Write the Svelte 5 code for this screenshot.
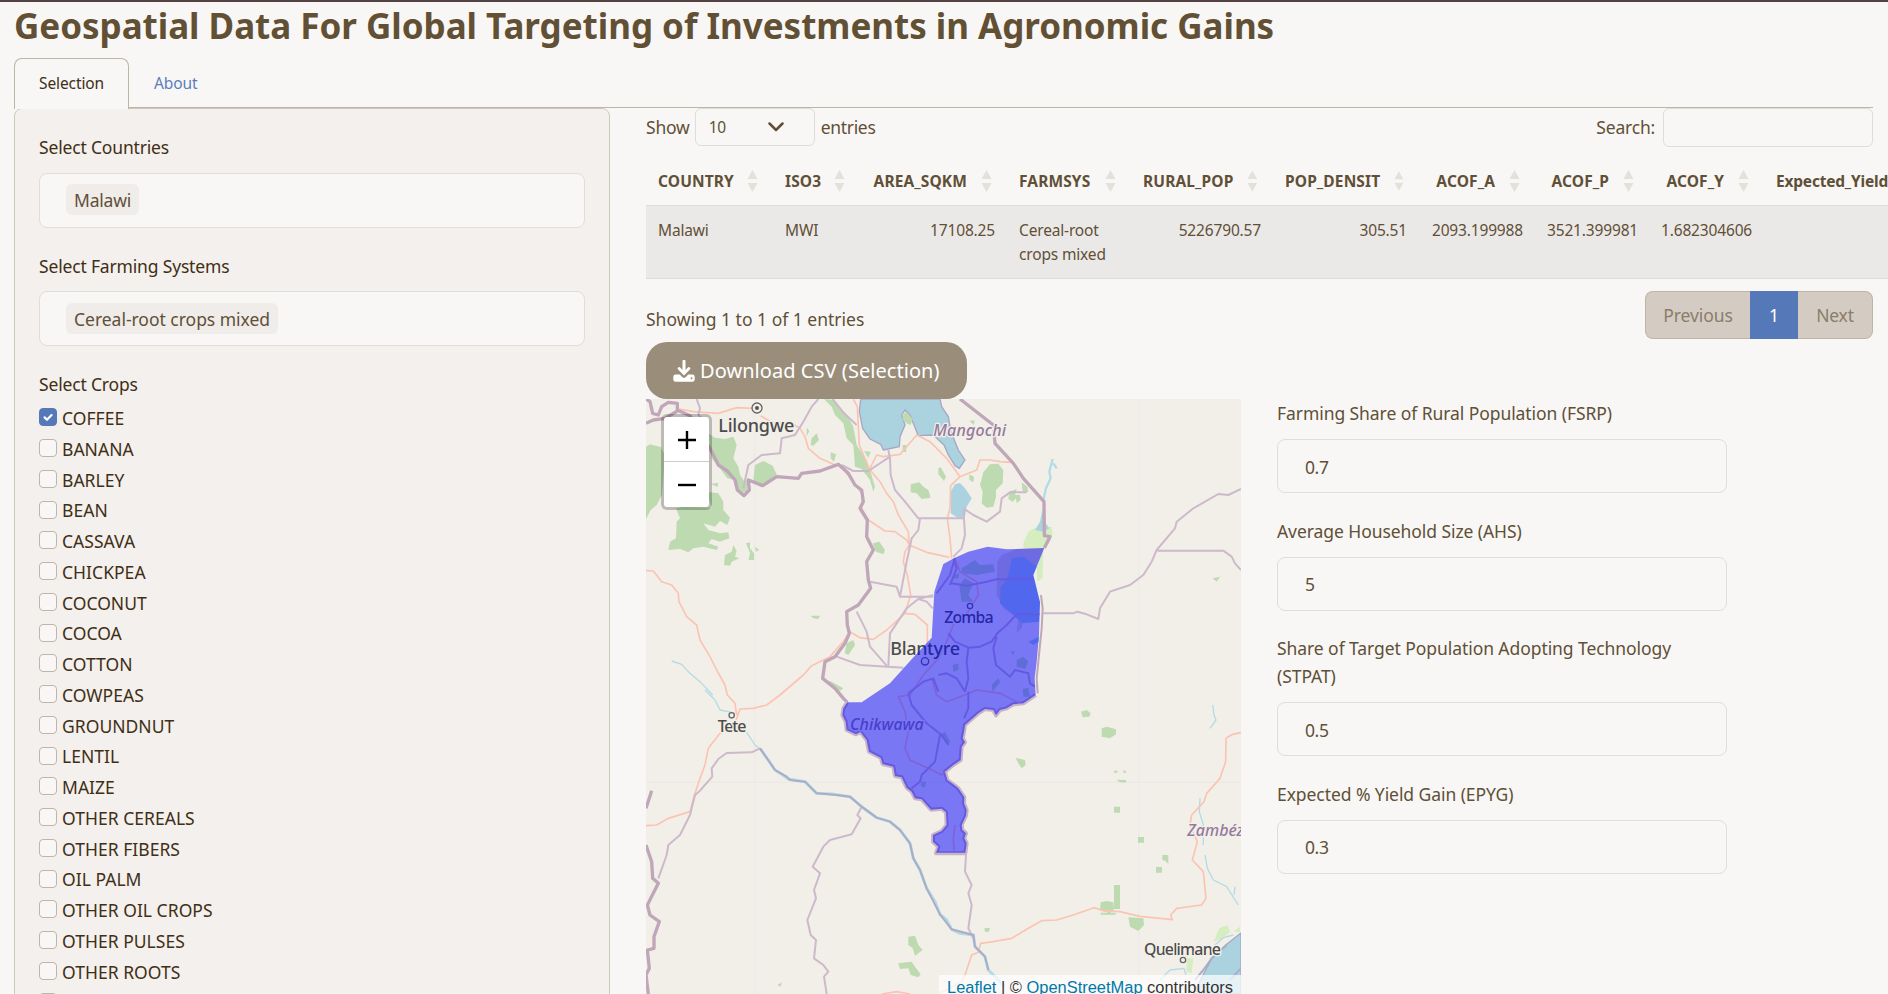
<script>
  const crops = [
    'COFFEE', 'BANANA', 'BARLEY', 'BEAN', 'CASSAVA', 'CHICKPEA', 'COCONUT', 'COCOA', 'COTTON', 'COWPEAS',
    'GROUNDNUT', 'LENTIL', 'MAIZE', 'OTHER CEREALS', 'OTHER FIBERS', 'OIL PALM', 'OTHER OIL CROPS',
    'OTHER PULSES', 'OTHER ROOTS', ''
  ];
  const columns = [
    { name: 'COUNTRY', value: 'Malawi', width: 127 },
    { name: 'ISO3', value: 'MWI', width: 87 },
    { name: 'AREA_SQKM', value: '17108.25', width: 147, num: true },
    { name: 'FARMSYS', value: 'Cereal-root crops mixed', width: 124 },
    { name: 'RURAL_POP', value: '5226790.57', width: 142, num: true },
    { name: 'POP_DENSIT', value: '305.51', width: 146, num: true },
    { name: 'ACOF_A', value: '2093.199988', width: 116, num: true },
    { name: 'ACOF_P', value: '3521.399981', width: 114, num: true },
    { name: 'ACOF_Y', value: '1.682304606', width: 115, num: true },
    { name: 'Expected_Yield', value: '', width: 165, num: true }
  ];
  const fields = [
    { label: 'Farming Share of Rural Population (FSRP)', value: '0.7' },
    { label: 'Average Household Size (AHS)', value: '5' },
    { label: 'Share of Target Population Adopting Technology (STPAT)', value: '0.5' },
    { label: 'Expected % Yield Gain (EPYG)', value: '0.3' }
  ];
  const district =
    'M622 922 L665 922 L750 865 L815 793 L875 728 L883 590 L910 507 L945 488 L985 470 L1043 455 L1100 463 L1213 459 L1180 540 L1200 622 L1197 720 L1190 800 L1184 850 L1187 900 L1150 925 L1120 928 L1100 940 L1080 945 L1068 961 L1060 945 L1035 942 L1015 955 L975 990 L972 1010 L968 1030 L975 1042 L965 1055 L962 1095 L940 1110 L915 1130 L922 1155 L940 1168 L955 1180 L973 1207 L972 1225 L980 1245 L978 1262 L965 1290 L967 1305 L978 1315 L973 1330 L980 1345 L976 1373 L888 1373 L895 1355 L879 1340 L879 1320 L905 1308 L920 1290 L918 1252 L905 1241 L873 1244 L845 1213 L825 1210 L815 1190 L800 1178 L785 1147 L765 1143 L760 1115 L728 1107 L722 1088 L687 1070 L680 1035 L661 1011 L648 1018 L620 1005 L617 980 L607 960 L610 940 Z';
  const boundary =
    'M1187 900 L1150 925 L1120 928 L1100 940 L1080 945 L1068 961 L1060 945 L1035 942 L1015 955 L975 990 L972 1010 L968 1030 L975 1042 L965 1055 L962 1095 L940 1110 L915 1130 L922 1155 L940 1168 L955 1180 L973 1207 L972 1225 L980 1245 L978 1262 L965 1290 L967 1305 L978 1315 L973 1330 L980 1345 L976 1375 L888 1375 L895 1355 L879 1340 L879 1320 L905 1308 L920 1290 L918 1252 L905 1241 L873 1244 L845 1213 L825 1210 L815 1190 L800 1178 L785 1147 L765 1143 L760 1115 L728 1107 L722 1088 L687 1070 L680 1035 L661 1011 L648 1018 L620 1005 L617 980 L607 960 L610 940 L622 922';
</script>

<div class="page">
  <h1>Geospatial Data For Global Targeting of Investments in Agronomic Gains</h1>
  <nav>
    <a class="tab active" href="#selection">Selection</a>
    <a class="tab" href="#about">About</a>
  </nav>

  <div class="columns">
    <aside>
      <div class="label">Select Countries</div>
      <div class="picker first"><span class="tag">Malawi</span></div>
      <div class="label">Select Farming Systems</div>
      <div class="picker"><span class="tag wide">Cereal-root crops mixed</span></div>
      <div class="label">Select Crops</div>
      <div class="crops">
        {#each crops as crop, i}
          <label class="crop">
            <span class="box" class:on={i === 0}>
              {#if i === 0}
                <svg viewBox="0 0 18 18"><path d="M5.600 9.400 8 11.800l4.600-4.700" /></svg>
              {/if}
            </span>
            <span class="name">{crop}</span>
          </label>
        {/each}
      </div>
    </aside>

    <main>
      <div class="controls">
        <div class="length">
          <span>Show</span>
          <div class="select">
            10
            <svg viewBox="0 0 16 10"><path d="M1.5 1.5 8 8l6.500-6.500" /></svg>
          </div>
          <span class="entries">entries</span>
        </div>
        <div class="search"><span>Search:</span><input aria-label="Search" /></div>
      </div>

      <div class="table">
        <div class="row head">
          {#each columns as c}
            <div class="cell" class:num={c.num} style="width: {c.width}px">
              <span>{c.name}</span>
              {#if c.name !== 'Expected_Yield'}
                <svg viewBox="0 0 11 22"><path d="M5.500 0 10.500 9H.5ZM.5 13h10l-5 9Z" /></svg>
              {/if}
            </div>
          {/each}
        </div>
        <div class="row body">
          {#each columns as c}
            <div class="cell" class:num={c.num} style="width: {c.width}px">{c.value}</div>
          {/each}
        </div>
      </div>

      <div class="footer">
        <div class="info">Showing 1 to 1 of 1 entries</div>
        <div class="pager">
          <span class="prev">Previous</span><span class="current">1</span><span class="next">Next</span>
        </div>
      </div>

      <button class="download">
        <svg viewBox="0 0 22 22">
          <path d="M9.500 1.200a1.500 1.500 0 0 1 3 0V10l2.400-2.400a1.400 1.400 0 0 1 2 2L11 15.400 5.100 9.600a1.400 1.400 0 0 1 2-2L9.500 10Z" />
          <path fill-rule="evenodd" d="M2.600 14.500h4.100l2.500 2.400a2.600 2.600 0 0 0 3.600 0l2.500-2.400h4.100A2.300 2.300 0 0 1 21.700 16.800v2.700a2.300 2.300 0 0 1-2.300 2.300H2.600A2.300 2.300 0 0 1 .3 19.500v-2.700a2.300 2.300 0 0 1 2.300-2.300ZM18.500 17.300a1 1 0 1 0 0 2 1 1 0 0 0 0-2Z" />
        </svg>
        <span>Download CSV (Selection)</span>
      </button>

      <div class="lower">
        <div class="map">
          <svg class="tiles" viewBox="18 12 1785 1785">
            <g class="seams"><path d="M344 12V1797M1496 12V1797M18 1162H1803" /></g>

            <g class="forest">
              <path d="M18 155 30 148 62 156 75 180 66 300 50 330 32 345 18 372Z" />
              <path d="M205 115 225 128 255 132 280 125 290 150 280 190 295 215 300 240 315 262 325 250 320 290 300 295 285 255 262 250 240 220 215 190Z" />
              <path d="M345 210 370 198 398 212 410 238 385 268 360 275 340 255Z" />
              <path d="M108 340 130 335 215 338 200 290 235 295 250 320 250 345 270 368 262 390 240 378 225 395 190 385 205 405 240 415 265 412 268 430 240 440 215 432 205 445 235 455 230 465 190 455 160 460 145 472 120 462 85 465 90 440 108 430 110 380 120 370Z" />
              <path d="M255 480 275 470 280 450 290 468 285 485 298 490 275 500 270 512 252 510ZM318 445 330 442 330 460 342 475 342 495 325 495 330 475ZM345 455 358 465 348 470ZM212 266 235 264 232 276Z" />
              <path d="M552 12 578 14 620 58 640 95 650 150 680 195 690 225 705 275 700 290 690 255 665 222 645 215 640 150 620 130 610 85 585 60 575 35Z" />
              <path d="M515 130 530 115 537 135 520 152 512 150ZM572 172 588 178 582 200 572 190ZM500 98 508 108 500 124ZM672 168 692 170 685 188Z" />
              <path d="M812 268 838 262 850 275 865 285 872 308 845 312 830 295 812 292Z" />
              <path d="M698 445 718 440 735 465 730 478 708 470ZM788 150 800 150 798 172 788 170ZM895 220 902 216 918 245 912 258 895 238Z" />
              <path d="M620 745 640 735 645 750 625 780 614 775ZM512 662 540 662 535 672 520 670ZM555 855 575 860 610 880 600 888 570 870Z" />
              <path d="M1030 232 1050 208 1075 206 1090 225 1088 265 1068 285 1068 305 1060 335 1040 338 1025 325 1028 290 1020 270ZM988 238 1002 245 1000 262 988 255ZM1108 290 1130 282 1125 300 1140 300 1142 315 1130 325 1128 310 1118 320 1105 312ZM1145 262 1162 275 1165 292 1148 288ZM988 78 1004 76 1002 90Z" />
              <path d="M1323 950 1340 945 1352 955 1348 965 1328 967ZM1385 1000 1400 995 1428 1003 1428 1018 1410 1030 1385 1025ZM1127 1089 1155 1095 1157 1110 1145 1120 1135 1105Z" />
              <path d="M1422 1235h18v18h-18ZM1494 1326h18v17h-18ZM1567 1380h18v26l-12-10h-6ZM1548 1416h18v17h-18ZM1422 1470h18v72h-18ZM1430 1154 1458 1155 1457 1163 1438 1161ZM1422 1127h10v6h-10ZM1450 1127h8v6h-8ZM1382 1522 1400 1518 1420 1522 1422 1542 1410 1555 1380 1545ZM1465 1567 1510 1570 1512 1590 1495 1608 1470 1595ZM1382 1553h45v6h-45ZM1033 1600 1050 1598 1047 1610 1035 1610Z" transform="translate(0 0)" />
              <path d="M805 1625 825 1622 835 1650 848 1665 825 1682 818 1660 805 1650ZM775 1705 800 1702 815 1700 825 1715 842 1738 835 1747 812 1740 805 1720 780 1722ZM412 1770 425 1762 422 1775ZM1718 550 1740 545 1730 560Z" />
            </g>
            <path class="marsh" d="M1150 445 1165 410 1185 398 1205 400 1235 395 1238 420 1225 450 1210 460 1208 550 1192 560 1190 520 1205 470 1150 460ZM1738 1600 1762 1590 1770 1610 1750 1630 1720 1640ZM1640 1690 1660 1690 1655 1735 1640 1730ZM1780 1610 1800 1595V1612Z" />
            <g class="water">
              <path d="M662 12H900L905 35 925 65 933 110 945 140 955 165 975 195 958 220 945 212 925 180 912 150 880 120 835 122 822 90 810 60 795 45 785 60 795 90 780 125 778 155 730 165 722 148 690 132 668 100 658 50Z" />
              <path d="M932 290 945 268 960 264 975 280 995 310 980 335 975 365 955 370 932 355Z" stroke="none" />
              <path d="M1207 345 1215 345 1217 385 1228 400 1212 410 1185 405 1200 380Z" stroke="none" />
              <path d="M1803 1614 1760 1648 1715 1690 1660 1797H1803Z" />
            </g>
            <path class="forest" d="M788 60 798 50 818 72 812 90 800 85 788 75Z" />
            <g class="stream">
              <path d="M1238 192 1228 230 1232 250 1218 280 1210 315M1240 205 1250 220" style:stroke-width="7" />
              <path d="M95 798 125 808 150 835 185 865 218 900M195 885 225 915 240 945 275 952M320 1012 345 1050 360 1062" />
              <path d="M1718 930 1722 960 1728 975 1710 1000M1680 1210 1678 1250 1690 1290 1690 1350M1695 1380 1702 1420 1720 1455 1760 1475 1795 1530M1785 1475 1782 1500M1725 1650 1750 1628 1780 1620M1638 1740 1632 1720 1590 1725 1560 1755" />
            </g>
            <path class="stream river" d="M360 1060 385 1095 405 1125 425 1138 445 1152 495 1160 530 1195 575 1197 630 1205 665 1235 710 1268 750 1280 780 1305 810 1345 820 1390 840 1425 860 1480 885 1520 900 1558 920 1575 935 1603 960 1615 1000 1620 1005 1655 1035 1685 1045 1725 1070 1750 1095 1775" />

            <g class="roads">
              <path d="M118 42 160 50 235 55 290 38 340 40 358 25M362 62 400 85 450 82 480 100 495 125 505 160 540 190 585 210M640 12 652 35 655 95 658 150 688 222 720 260 740 295 760 320 775 360 805 410 808 450 860 472 928 487M690 220 710 180 730 185 780 178 830 120 870 140 920 190 960 245M960 245 1010 225 1020 195 1050 195 1080 200 1110 202M960 245 932 272 930 340 922 370 930 430 935 490" />
              <path d="M600 210 640 260 668 300 665 340 685 375 735 408 765 410 800 435 808 450 795 470 790 500 802 540 812 600 795 655 740 705 700 733 660 728 630 710 610 740 570 785 515 812 490 840 455 870 420 900 380 930 340 940 300 942 285 985 240 1015 205 1060 195 1110 180 1150 165 1195 150 1250 85 1270 50 1290 18 1292M18 527 40 528 65 560 95 570 115 595 117 620 140 665 170 690 180 735 210 785 230 825 255 870 262 900 285 925 290 960M795 655 825 658 862 690 862 760" />
              <path d="M1803 1013 1778 1018 1758 1030 1757 1100 1740 1150 1700 1195 1692 1220 1655 1260 1650 1290 1672 1340 1657 1395 1690 1430 1698 1510 1685 1530 1610 1540 1592 1560 1597 1574 1500 1564 1440 1550 1390 1547 1362 1538 1300 1560 1250 1575 1205 1577 1165 1600 1115 1630 1060 1640 1022 1645 1015 1672 995 1680 975 1740 965 1760 900 1795M725 1797 770 1790 810 1797" />
            </g>

            <g class="border">
              <path d="M170 12 180 40 175 60 205 90M310 280 325 210 365 180 420 175 425 130 465 120 490 80 515 35 535 12M745 165 750 190 752 240 765 285 795 320 835 370 970 370M840 370 835 405 815 430 800 500 780 605M690 560 770 575 780 605 880 605M650 650 680 710 690 755 740 812M590 785 660 810 790 818M745 812 750 715 800 640 835 612 860 620 878 640M835 612 880 600M578 12 612 55 650 90M605 210 640 228 685 228 750 185" />
              <path d="M970 340 975 420 965 460 940 485M970 340 1000 360 1040 380 1080 350 1085 310 1110 292 1160 292M1210 655 1300 655 1312 650 1340 658 1375 672 1380 640 1410 590 1470 570 1510 540 1535 500 1550 465 1605 400 1610 380 1660 340 1735 297 1765 300 1803 282M1553 467H1750L1775 485 1785 505 1803 525" />
              <path d="M335 1072 260 1074 235 1092 215 1120 217 1145 180 1187 165 1200 150 1260 120 1320 85 1350 80 1380 55 1450M360 1060 335 1072M665 1235 652 1260 662 1270 635 1318 570 1335 550 1355 518 1415 540 1435 522 1485 528 1510 502 1575 512 1620 528 1635 522 1690 550 1710 565 1730 552 1745 560 1797M978 1380 975 1430 995 1470 985 1495 995 1530 985 1600 1000 1630" />
            </g>
            <path class="border riverborder" d="M360 1060 405 1125 440 1145 450 1155 495 1160 530 1195 590 1200 630 1205 665 1235 710 1268 750 1280 780 1305 810 1345 820 1390 840 1425 860 1480 900 1558 935 1603 1000 1620 1005 1655 1035 1685 1045 1725M1760 1650 1715 1690 1690 1725 1665 1755M1803 1720 1770 1755" />
            <g class="country">
              <path d="M18 12 30 20 38 55 55 60 65 35 85 22 112 25 112 48 75 70 40 75 18 85M112 45 150 62 210 160 235 210 262 228 285 255 292 285 312 302 328 285 325 255 368 272 410 245 475 250 485 235 540 228 595 208 625 235 645 270 665 285 670 320 660 340 682 375 680 425 700 465 680 500 685 555 692 580 655 630 620 650 622 690 628 715 615 745 585 785 555 800 548 850 585 880 610 910 622 922" />
              <path d="M960 12 1060 90 1065 145 1120 205 1150 250 1212 320 1213 422 1230 425 1213 459" />
              <path d="M35 1187 18 1240M18 1350 35 1400 38 1450 55 1465 22 1530 30 1560 58 1580 42 1625 42 1660 22 1665 28 1720 18 1740 25 1797" />
            </g>
            <path class="country faint" d="M1203 600 1208 640 1205 700 1195 800 1190 850 1193 895" />
            <path class="outline" d={boundary} />

            <path class="tint" d="M1072 500 1085 480 1130 462 1210 459 1180 540 1145 700 1130 712 1135 670 1090 640 1070 600Z" />
            <path class="deep" d="M1115 490 1150 485 1190 515 1180 540 1200 622 1197 680 1145 685 1110 650 1080 625 1082 575 1100 555 1110 520ZM1165 740 1198 725 1197 740 1180 750Z" />
            <path class="forest" d="M965 520 1005 495 1020 510 1060 508 1065 530 1010 540 965 535ZM958 570 975 550 1000 565 985 600 1000 620 965 620ZM1130 795 1150 785 1165 800 1155 822 1130 815ZM938 810 955 805 955 825 940 830ZM1055 870 1075 850 1080 862 1058 890ZM1148 882 1165 878 1170 905 1150 905ZM940 540 958 535 955 550 940 552ZM1110 770 1125 768 1120 780ZM900 1020 915 1010 930 1040 925 1050ZM845 1160 858 1160 855 1178 842 1172Z" />
            <path class="roads" d="M945 490 960 530 1010 560 1015 600 985 650 940 690 920 740 895 790 850 840 810 900 775 905 795 950 805 1010 795 1060 810 1095 865 1120 905 1140 915 1130M875 850 890 900 920 920 960 905 1010 885 1080 895 1140 925M945 1290 940 1330 942 1365" />
            <path class="lines" d="M945 488 930 540 890 595M935 565 980 572 1040 560 1070 553 1180 553M940 490 950 520 930 570M1200 658H1130L1100 690 1072 715 1055 740 1020 755 985 758 945 740 925 715M1070 725 1060 760 1068 810 1110 845 1125 825 1165 835 1170 865 1185 875M985 758 980 800 985 850 975 890M975 890 950 850 920 835 895 840M805 895 850 860 880 850 895 890M805 895 815 930 860 985 905 1020 925 1050M900 1020 885 1100 845 1140 840 1160 815 1180M985 890 985 940 972 970" />

            <g class="towns">
              <circle cx="351" cy="39" r="15" /><circle class="dot" cx="351" cy="39" r="6" />
              <circle cx="275" cy="961" r="8" /><circle cx="1629" cy="1695" r="8" />
              <circle cx="990" cy="633" r="8" /><circle cx="855" cy="799" r="11" />
            </g>
            <g class="names">
              <text x="235" y="111" textLength="228">Lilongwe</text>
              <text class="region small" x="880" y="123" textLength="218">Mangochi</text>
              <text class="small" x="913" y="685" textLength="148">Zomba</text>
              <text x="751" y="779" textLength="209">Blantyre</text>
              <text class="small" x="233" y="1010" textLength="86">Tete</text>
              <text class="region small" x="630" y="1004" textLength="221">Chikwawa</text>
              <text class="region small" x="1642" y="1322">Zambézia</text>
              <text class="small" x="1512" y="1679" textLength="231">Quelimane</text>
            </g>
            <path class="district" d={district} />
          </svg>
          <div class="zoom">
            <span><svg viewBox="0 0 18 18"><path d="M9 0v18M0 9h18" /></svg></span>
            <span><svg viewBox="0 0 18 18"><path d="M0 9h18" /></svg></span>
          </div>
          <div class="credit"><a href="#leaflet">Leaflet</a> | © <a href="#osm">OpenStreetMap</a> contributors</div>
        </div>

        <form>
          {#each fields as f}
            <label class="field">
              <span>{f.label}</span>
              <input value={f.value} />
            </label>
          {/each}
        </form>
      </div>
    </main>
  </div>
</div>

<style>
  :global(body) { background: #f8f7f5; overflow: hidden; }
  .page {
    box-sizing: border-box; height: 994px; overflow: hidden; padding-left: 14px;
    border-top: 2px solid #544242; background: #f8f7f5; color: #5f5037;
    font: 17.500px/28px "Noto Sans", sans-serif; letter-spacing: -0.2px;
  }
  h1 { margin: 0 0 9px; font-size: 35px; line-height: 47px; font-weight: 700; letter-spacing: -0.030px; white-space: nowrap; color: #625034; }
  nav { display: flex; height: 49px; width: 1859px; border-bottom: 1px solid #bdb5a5; }
  .tab { box-sizing: border-box; height: 49px; line-height: 51px; padding: 0 25px; font-size: 15.500px; letter-spacing: -0.1px; color: #5c7dbb; text-decoration: none; }
  .tab.active { width: 115px; height: 51px; padding: 0 24px; border: 1px solid #bdb5a5; border-bottom: 0; border-radius: 8px 8px 0 0; background: #f8f7f5; color: #3e2f18; position: relative; line-height: 49px; }
  .columns { display: flex; gap: 36px; }
  aside { box-sizing: border-box; flex: none; width: 596px; height: 920px; padding: 24px 24px 0; border: 1px solid #cfc9bc; border-radius: 8px; background: #f4f0ed; color: #3f2f15; }
  .label { height: 28px; line-height: 29px; white-space: nowrap; letter-spacing: -0.170px; }
  .picker { box-sizing: border-box; height: 55px; margin: 11px 0 24px; padding: 11px 26px; border: 1px solid #e0dedb; border-radius: 8px; background: #f8f7f5; }
  .picker.first { margin-top: 12px; padding-top: 10px; }
  .tag { display: inline-block; height: 31px; line-height: 32px; padding: 0 8px; border-radius: 6px; background: #f0ecea; color: #5f5037; white-space: nowrap; }
  .tag.wide { letter-spacing: -0.020px; }
  .crops { padding-top: 4px; }
  .crop { display: flex; align-items: center; gap: 5px; height: 30.750px; white-space: nowrap; letter-spacing: 0.030px; }
  .crop .name { line-height: 28px; padding-top: 1.500px; }
  .box { box-sizing: border-box; width: 18px; height: 18px; border: 1px solid #bfb6a8; border-radius: 4px; background: #f8f7f5; flex: none; }
  .box.on { background: #5578b8; border-color: #5578b8; }
  .box svg { display: block; width: 18px; height: 18px; margin: -1px; fill: none; stroke: #fff; stroke-width: 2.200; stroke-linecap: round; stroke-linejoin: round; }

  main { width: 1242px; flex: none; }
  .controls { display: flex; justify-content: space-between; width: 1227px; height: 47px; }
  .length { display: flex; line-height: 38px; }
  .select { box-sizing: border-box; display: flex; align-items: center; gap: 42px; width: 120px; height: 38px; margin: 0 6px 0 5px; padding-left: 13px; border: 1px solid #dfddda; border-radius: 6px; font-size: 15.500px; letter-spacing: -0.3px; }
  .select svg { width: 16px; height: 10px; fill: none; stroke: #5f5037; stroke-width: 2.500; stroke-linecap: round; stroke-linejoin: round; }
  .entries { letter-spacing: -0.3px; }
  .search { display: flex; gap: 8px; line-height: 39px; }
  .search input { box-sizing: border-box; width: 210px; height: 39px; border: 1px solid #dfddda; border-radius: 6px; background: transparent; }
  .table { width: 1242px; overflow: hidden; }
  .row { display: flex; width: max-content; }
  .cell { box-sizing: border-box; flex: none; padding: 12px; font-size: 15.500px; line-height: 24px; letter-spacing: -0.160px; }
  .head .cell { display: flex; align-items: center; justify-content: space-between; padding: 1px 15px 0 12px; height: 50px; font-weight: 700; font-size: 15.500px; letter-spacing: 0.120px; }
  .head .num { justify-content: flex-end; gap: 14px; }
  .head svg { width: 11px; height: 22px; fill: #e3e1d9; margin-top: 1px; }
  .head .cell:last-child { justify-content: flex-start; letter-spacing: -0.2px; }
  .body { border-top: 1px solid #dedcd9; border-bottom: 1px solid #dedcd9; background: #ebe9e8; }
  .body .num { text-align: right; padding-right: 12px; }
  .footer { display: flex; justify-content: space-between; width: 1227px; height: 63px; }
  .info { padding-top: 26px; white-space: nowrap; letter-spacing: 0; }
  .pager { display: flex; height: 48px; margin-top: 12px; color: #8a7d6b; }
  .pager span { box-sizing: border-box; height: 48px; border: 1px solid #bfb5a6; background: #d4ccc2; text-align: center; line-height: 47px; }
  .pager .prev { width: 105px; border-radius: 8px 0 0 8px; border-right: 0; letter-spacing: -0.1px; }
  .pager .current { width: 48px; background: #5578b8; border-color: #5578b8; color: #fff; }
  .pager .next { width: 75px; border-radius: 0 8px 8px 0; border-left: 0; }
  .download { display: flex; align-items: center; width: 321px; height: 57px; padding: 1px 0 0 27px; gap: 5px; border: 0; border-radius: 21px; background: #9a8e7b; color: #fff; font: 20px/58px "Noto Sans", sans-serif; letter-spacing: 0.050px; white-space: nowrap; }
  .download svg { width: 22px; height: 22px; fill: #fff; }

  .lower { display: flex; gap: 36px; }
  .map { position: relative; width: 595px; height: 595px; flex: none; overflow: hidden; background: #f2efe9; }
  .tiles { display: block; width: 595px; height: 595px; stroke-linejoin: round; }
  .seams { fill: none; stroke: #e6e6e5; stroke-width: 2; }
  .forest { fill: #bddab1; }
  .marsh { fill: #d6eebf; }
  .water { fill: #aad3df; stroke: #a9a5c4; stroke-width: 4; }
  .stream { fill: none; stroke: #b3dbe6; stroke-width: 4; }
  .river { stroke-width: 9; }
  .roads { fill: none; stroke: #fbc4b2; stroke-width: 5; }
  .border { fill: none; stroke: #cdb9cb; stroke-width: 6; }
  .riverborder { stroke: #a9adc6; }
  .country { fill: none; stroke: #c0a6b9; stroke-width: 10; }
  .faint { stroke-width: 6; }
  .outline { fill: none; stroke: #c8b2c6; stroke-width: 12; }
  .district { fill: #0000ff; fill-opacity: 0.5; }
  .tint { fill: #dad5c4; }
  .deep { fill: #a2cfdc; }
  .lines { fill: none; stroke: #c8b2c6; stroke-width: 6; }
  .towns { fill: #f2efe9; stroke: #666; stroke-width: 4; }
  .towns .dot { fill: #555; stroke: none; }
  .names { font: 500 54px "Noto Sans", sans-serif; letter-spacing: 0; fill: #4c4c4c; stroke: #f2efe9; stroke-width: 8; paint-order: stroke; }
  .names .small { font-size: 48px; }
  .names .region { font-style: italic; fill: #957a9b; }
  .zoom { position: absolute; left: 15px; top: 15px; width: 45px; height: 90px; border: 3px solid rgba(0, 0, 0, 0.22); border-radius: 6px; background: #fff; background-clip: padding-box; }
  .zoom span { display: flex; box-sizing: border-box; align-items: center; justify-content: center; height: 45px; padding-top: 1px; }
  .zoom span:first-child { border-bottom: 1px solid #ccc; }
  .zoom svg { width: 18px; height: 18px; fill: none; stroke: #000; stroke-width: 2.400; }
  .credit { position: absolute; right: 0; bottom: 0; height: 19px; padding: 0 8px; line-height: 24px; font-family: "Liberation Sans", sans-serif; font-size: 16.450px; letter-spacing: 0; color: #333; background: rgba(255, 255, 255, 0.7); white-space: nowrap; }
  .credit a { color: #0078a8; text-decoration: none; }

  form { width: 450px; }
  .field { display: block; margin-bottom: 23.600px; letter-spacing: -0.070px; }
  .field span { display: block; margin-bottom: 12px; }
  .field input { box-sizing: border-box; display: block; width: 450px; height: 54px; padding: 1px 27px 0; border: 1px solid #e0dedb; border-radius: 8px; background: #f8f7f5; color: #5f5037; font: 17.500px "Noto Sans", sans-serif; letter-spacing: -0.4px; outline: 0; }
</style>
